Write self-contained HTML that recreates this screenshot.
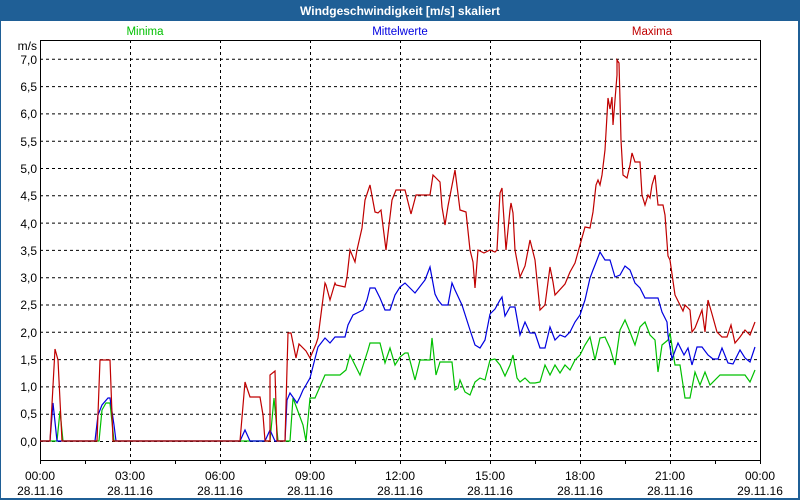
<!DOCTYPE html>
<html><head><meta charset="utf-8"><style>
html,body{margin:0;padding:0;background:#fff;}
svg{display:block;}
text{font-family:"Liberation Sans","DejaVu Sans",sans-serif;}
</style></head><body>
<svg width="800" height="500" xmlns="http://www.w3.org/2000/svg">
<rect x="0" y="0" width="800" height="500" fill="#1f5f96"/>
<rect x="1" y="21" width="797" height="477" fill="#fff"/>
<text x="400" y="15" fill="#fff" font-size="12" font-weight="bold" text-anchor="middle">Windgeschwindigkeit [m/s] skaliert</text>
<text x="145" y="35" fill="#00c000" font-size="11.5" text-anchor="middle">Minima</text>
<text x="400" y="35" fill="#0000e0" font-size="11.5" text-anchor="middle">Mittelwerte</text>
<text x="652" y="35" fill="#c00000" font-size="11.5" text-anchor="middle">Maxima</text>
<g stroke="#000" stroke-width="1" stroke-dasharray="3,3" fill="none">
<path d="M40 441.5H760M40 414.2H760M40 386.9H760M40 359.6H760M40 332.3H760M40 305H760M40 277.7H760M40 250.4H760M40 223.1H760M40 195.8H760M40 168.5H760M40 141.2H760M40 113.9H760M40 86.6H760M40 59.3H760"/>
<path d="M130.5 40V460M220.5 40V460M310.5 40V460M400.5 40V460M490.5 40V460M580.5 40V460M670.5 40V460"/>
</g>
<rect x="40.5" y="40.5" width="720" height="420" fill="none" stroke="#000"/>
<path d="M40.5 460v4M85.5 460v4M130.5 460v4M175.5 460v4M220.5 460v4M265.5 460v4M310.5 460v4M355.5 460v4M400.5 460v4M445.5 460v4M490.5 460v4M535.5 460v4M580.5 460v4M625.5 460v4M670.5 460v4M715.5 460v4M760.5 460v4" stroke="#000"/>
<g font-size="12" fill="#000" text-anchor="end">
<text x="37" y="50">m/s</text>
<text x="37" y="64">7,0</text><text x="37" y="91">6,5</text><text x="37" y="118">6,0</text><text x="37" y="146">5,5</text><text x="37" y="173">5,0</text><text x="37" y="200">4,5</text><text x="37" y="228">4,0</text><text x="37" y="255">3,5</text><text x="37" y="282">3,0</text><text x="37" y="309">2,5</text><text x="37" y="337">2,0</text><text x="37" y="364">1,5</text><text x="37" y="391">1,0</text><text x="37" y="418">0,5</text><text x="37" y="446">0,0</text>
</g>
<g font-size="12" fill="#000" text-anchor="middle">
<text x="40" y="480">00:00</text><text x="40" y="495">28.11.16</text>
<text x="130" y="480">03:00</text><text x="130" y="495">28.11.16</text>
<text x="220" y="480">06:00</text><text x="220" y="495">28.11.16</text>
<text x="310" y="480">09:00</text><text x="310" y="495">28.11.16</text>
<text x="400" y="480">12:00</text><text x="400" y="495">28.11.16</text>
<text x="490" y="480">15:00</text><text x="490" y="495">28.11.16</text>
<text x="580" y="480">18:00</text><text x="580" y="495">28.11.16</text>
<text x="670" y="480">21:00</text><text x="670" y="495">28.11.16</text>
<text x="760" y="480">00:00</text><text x="760" y="495">29.11.16</text>
</g>
<g fill="none" stroke-width="1.2">
<polyline stroke="#00c000" points="40,441 57,441 60,411 63,441 99,441 102,410 106,403 110,403 114,441 270,441 274,398 278,441 290,441 293,398 303,425 306,441 310,398 315,398 325,375 340,375 346,370 350,355 360,375 368,350 370,343 380,343 385,363 390,348 395,365 400,357 405,353 408,353 415,380 420,360 430,360 432,338 436,375 440,362 452,362 455,390 458,388 460,380 465,392 470,395 475,382 480,378 485,380 490,360 495,359 500,365 505,376 510,365 513,355 517,378 520,382 525,378 530,383 535,383 540,382 545,365 550,375 555,365 560,373 565,365 570,370 575,360 580,355 585,345 590,337 595,360 600,338 605,337 610,348 615,365 620,330 625,320 630,332 635,345 640,327 645,322 650,335 655,340 658,372 662,345 668,340 670,333 675,365 680,365 685,398 690,398 695,372 700,385 705,372 710,385 720,375 745,375 750,382 755,370"/>
<polyline stroke="#0000e0" points="40,441 50,441 53,403 57,441 95,441 98,415 102,405 108,398 110,398 114,425 116,441 240,441 245,430 250,441 265,441 270,430 275,441 285,441 287,400 290,393 297,403 300,397 303,390 306,385 310,378 318,347 325,338 330,343 335,337 345,337 348,325 353,315 357,313 363,310 367,300 370,288 375,288 380,298 385,310 390,310 395,295 400,287 405,283 415,293 425,280 430,267 435,294 438,300 442,305 448,305 452,283 455,290 462,305 470,330 475,345 480,348 485,340 490,314 495,309 500,300 502,297 505,316 510,307 515,307 520,335 525,322 530,333 535,333 540,348 545,348 550,327 555,340 560,335 565,337 570,332 575,322 580,315 585,300 590,278 593,270 595,265 600,252 605,260 610,260 615,277 620,275 625,266 630,270 635,283 640,288 645,298 650,298 658,298 662,312 667,322 668,335 672,359 678,343 684,355 688,348 692,365 697,347 702,347 708,355 713,359 718,359 722,348 728,363 733,364 740,350 745,358 750,362 755,347"/>
<polyline stroke="#c00000" points="40,441 50,441 55,349 58,360 62,441 97,441 100,360 110,360 113,441 240,441 245,382 250,397 260,397 263,415 265,441 270,441 270,375 275,371 277,441 285,441 288,333 291,333 296,358 299,344 306,351 310,358 316,344 318,338 320,322 325,283 326,285 330,300 335,283 336,285 345,287 347,277 350,250 355,262 357,250 362,228 365,200 370,185 375,212 378,213 381,210 386,250 392,200 396,190 400,190 405,190 411,214 416,195 430,195 433,175 440,182 442,207 445,225 448,206 455,170 460,210 466,212 470,250 473,262 475,288 478,250 484,253 490,250 495,252 497,250 500,193 502,188 503,205 506,250 510,210 511,203 513,213 515,250 520,277 525,266 530,240 535,260 540,310 545,305 550,267 553,282 555,295 565,284 570,272 575,263 580,245 585,227 590,228 593,212 596,185 598,180 600,185 602,175 605,150 608,98 610,109 612,97 613,125 615,100 617,75 617,60 619,63 620,100 621,140 623,175 627,178 630,165 632,153 635,162 640,162 642,195 645,205 648,195 650,198 652,185 655,175 658,205 663,205 665,215 668,256 670,260 675,295 683,311 685,305 690,310 692,332 695,328 702,310 705,332 708,300 712,314 717,332 722,337 727,337 731,325 735,343 740,337 745,330 750,335 755,322"/>
</g>
</svg>
</body></html>
